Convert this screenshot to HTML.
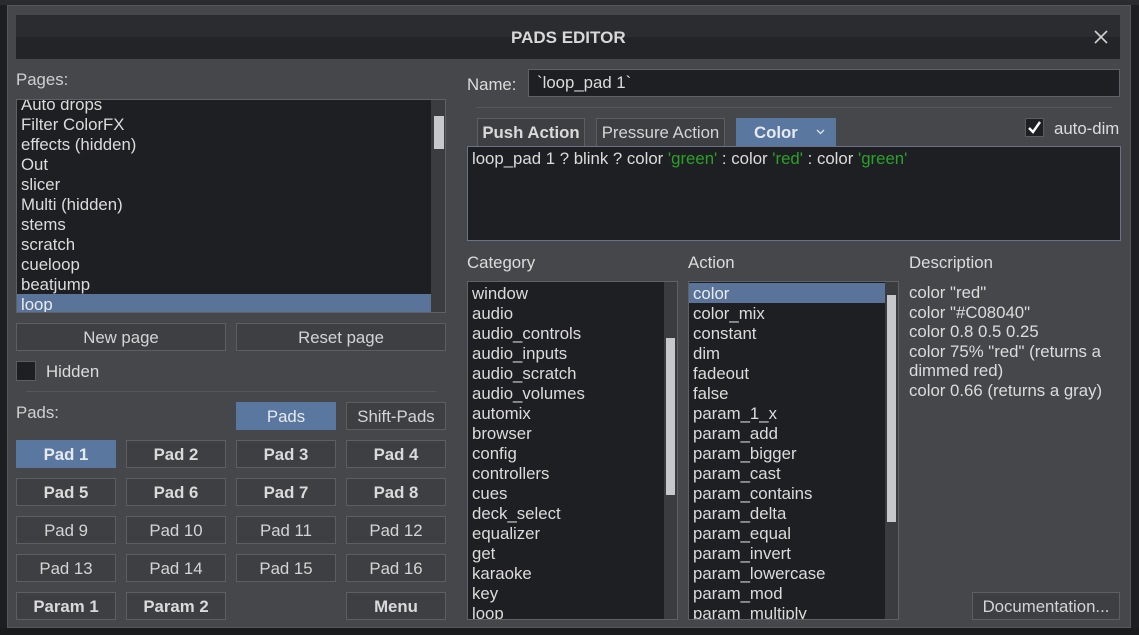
<!DOCTYPE html>
<html><head><style>
*{margin:0;padding:0;box-sizing:border-box}
body{width:1139px;height:635px;background:#1d1e21;position:relative;overflow:hidden;font-family:"Liberation Sans",Arial,sans-serif;font-size:16.8px;color:#dcdcdc}
.a{position:absolute}
.dlg{left:7px;top:5px;width:1124px;height:623px;background:#45474b;border:1px solid #55575b}
.title{left:16px;top:15px;width:1104px;height:44px;background:linear-gradient(#2b2c2f 50%,#232427 50%)}
.list{background:#1e1f22;border:1px solid #5f6166;overflow:hidden}
.list div{height:20px;line-height:21px;padding-left:4px;white-space:nowrap}
.sel{background:#5a7398;color:#e8ecf2}
.sb{background:#3a3c40}
.th{background:#c7c8cc}
.btn{border:1px solid #5c5e62;background:#3d3f43;text-align:center;line-height:27px;color:#d4d4d4}
.b{font-weight:bold;color:#dadada}
.blue{background:#5a77a0;border-color:#5a77a0;color:#e6eaf0}
.g{color:#2aa12a}
</style></head><body>
<div class="a" style="left:0;top:0;width:1139px;height:5px;background:#2a2b2e"></div>
<div class="a" style="left:0;top:628px;width:1139px;height:7px;background:#1a1b1d"></div>
<div class="a dlg"></div>
<div class="a title"></div>
<div class="a" style="left:511px;top:28px;font-weight:bold;font-size:17px;color:#d8d8d8">PADS EDITOR</div>
<svg class="a" style="left:1094px;top:30px" width="14" height="14"><path d="M1 1L13 13M13 1L1 13" stroke="#d0d0d0" stroke-width="1.6"/></svg>

<div class="a" style="left:16px;top:70px;color:#d0d0d0">Pages:</div>
<div class="a list" style="left:16px;top:99px;width:430px;height:214px">
<div style="margin-top:-6px">Auto drops</div><div>Filter ColorFX</div><div>effects (hidden)</div><div>Out</div><div>slicer</div><div>Multi (hidden)</div><div>stems</div><div>scratch</div><div>cueloop</div><div>beatjump</div><div class="sel" style="width:415px">loop</div>
</div>
<div class="a sb" style="left:431px;top:100px;width:14px;height:212px"></div>
<div class="a th" style="left:434px;top:116px;width:10px;height:33px"></div>

<div class="a btn" style="left:16px;top:323px;width:210px;height:28px">New page</div>
<div class="a btn" style="left:236px;top:323px;width:210px;height:28px">Reset page</div>
<div class="a" style="left:16px;top:361px;width:20px;height:20px;background:#1e1f22;border:1px solid #5a5c60"></div>
<div class="a" style="left:46px;top:362px">Hidden</div>
<div class="a" style="left:26px;top:391px;width:410px;height:1px;background:#55575b"></div>
<div class="a" style="left:16px;top:403px;color:#d0d0d0">Pads:</div>
<div class="a btn blue" style="left:236px;top:402px;width:100px;height:28px">Pads</div>
<div class="a btn" style="left:346px;top:402px;width:100px;height:28px">Shift-Pads</div>

<div class="a btn b blue" style="left:16px;top:440px;width:100px;height:28px">Pad 1</div>
<div class="a btn b" style="left:126px;top:440px;width:100px;height:28px">Pad 2</div>
<div class="a btn b" style="left:236px;top:440px;width:100px;height:28px">Pad 3</div>
<div class="a btn b" style="left:346px;top:440px;width:100px;height:28px">Pad 4</div>
<div class="a btn b" style="left:16px;top:478px;width:100px;height:28px">Pad 5</div>
<div class="a btn b" style="left:126px;top:478px;width:100px;height:28px">Pad 6</div>
<div class="a btn b" style="left:236px;top:478px;width:100px;height:28px">Pad 7</div>
<div class="a btn b" style="left:346px;top:478px;width:100px;height:28px">Pad 8</div>
<div class="a btn" style="left:16px;top:516px;width:100px;height:28px">Pad 9</div>
<div class="a btn" style="left:126px;top:516px;width:100px;height:28px">Pad 10</div>
<div class="a btn" style="left:236px;top:516px;width:100px;height:28px">Pad 11</div>
<div class="a btn" style="left:346px;top:516px;width:100px;height:28px">Pad 12</div>
<div class="a btn" style="left:16px;top:554px;width:100px;height:28px">Pad 13</div>
<div class="a btn" style="left:126px;top:554px;width:100px;height:28px">Pad 14</div>
<div class="a btn" style="left:236px;top:554px;width:100px;height:28px">Pad 15</div>
<div class="a btn" style="left:346px;top:554px;width:100px;height:28px">Pad 16</div>
<div class="a btn b" style="left:16px;top:592px;width:100px;height:28px">Param 1</div>
<div class="a btn b" style="left:126px;top:592px;width:100px;height:28px">Param 2</div>
<div class="a btn b" style="left:346px;top:592px;width:100px;height:28px">Menu</div>

<div class="a" style="left:467px;top:75px">Name:</div>
<div class="a list" style="left:528px;top:69px;width:592px;height:28px;line-height:26px;padding-left:8px">`loop_pad 1`</div>
<div class="a" style="left:476px;top:107px;width:636px;height:1px;background:#55575b"></div>
<div class="a btn b" style="left:477px;top:118px;width:108px;height:28px;border-bottom:none">Push Action</div>
<div class="a btn" style="left:596px;top:118px;width:129px;height:28px;border-bottom:none">Pressure Action</div>
<div class="a btn b blue" style="left:736px;top:118px;width:100px;height:29px;text-align:left;padding-left:17px">Color</div>
<svg class="a" style="left:816px;top:129px" width="9" height="6"><path d="M1 1L4.5 4.5L8 1" stroke="#e0e4ea" stroke-width="1.3" fill="none"/></svg>
<div class="a" style="left:1025px;top:118px;width:19px;height:19px;background:#1e1f22;border:1px solid #5a5c60"></div>
<svg class="a" style="left:1027px;top:120px" width="15" height="15"><path d="M2 8L6 12L13 2" stroke="#fff" stroke-width="2.4" fill="none"/></svg>
<div class="a" style="left:1054px;top:119px">auto-dim</div>
<div class="a list" style="left:467px;top:146px;width:654px;height:95px;border-color:#6a7288;padding:2px 4px">loop_pad 1 ? blink ? color <span class="g">'green'</span> : color <span class="g">'red'</span> : color <span class="g">'green'</span></div>

<div class="a" style="left:467px;top:253px">Category</div>
<div class="a" style="left:688px;top:253px">Action</div>
<div class="a" style="left:909px;top:253px">Description</div>
<div class="a list" style="left:467px;top:281px;width:211px;height:339px;padding-top:1px">
<div>window</div><div>audio</div><div>audio_controls</div><div>audio_inputs</div><div>audio_scratch</div><div>audio_volumes</div><div>automix</div><div>browser</div><div>config</div><div>controllers</div><div>cues</div><div>deck_select</div><div>equalizer</div><div>get</div><div>karaoke</div><div>key</div><div>loop</div>
</div>
<div class="a sb" style="left:664px;top:282px;width:13px;height:337px"></div>
<div class="a th" style="left:666px;top:338px;width:9px;height:157px"></div>
<div class="a list" style="left:688px;top:281px;width:211px;height:339px;padding-top:1px">
<div class="sel" style="width:196px">color</div><div>color_mix</div><div>constant</div><div>dim</div><div>fadeout</div><div>false</div><div>param_1_x</div><div>param_add</div><div>param_bigger</div><div>param_cast</div><div>param_contains</div><div>param_delta</div><div>param_equal</div><div>param_invert</div><div>param_lowercase</div><div>param_mod</div><div>param_multiply</div>
</div>
<div class="a sb" style="left:885px;top:282px;width:13px;height:337px"></div>
<div class="a th" style="left:887px;top:295px;width:9px;height:227px"></div>
<div class="a" style="left:909px;top:283px;line-height:19.6px">color "red"<br>color "#C08040"<br>color 0.8 0.5 0.25<br>color 75% "red" (returns a<br>dimmed red)<br>color 0.66 (returns a gray)</div>
<div class="a btn" style="left:972px;top:592px;width:148px;height:28px">Documentation...</div>
</body></html>
